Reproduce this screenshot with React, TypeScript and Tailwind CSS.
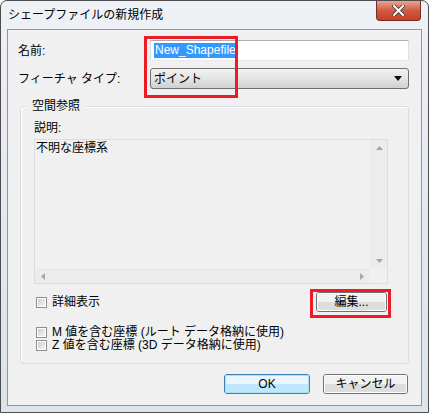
import React from "react";

const font = { fontFamily: '"Liberation Sans", "Noto Sans CJK JP", sans-serif' };

function Checkbox({ label }: { label: string }) {
  return (
    <div className="flex items-center gap-[5px] h-[12px]">
      <div className="w-[11px] h-[11px] border border-[#8e8f8f] bg-white p-[1px]">
        <div className="w-full h-full bg-gradient-to-br from-[#cbcfd5] to-[#f6f6f6]" />
      </div>
      <span className="text-[12px] leading-[12px] text-black whitespace-nowrap">{label}</span>
    </div>
  );
}

function Button({ label, w, def }: { label: string; w: string; def?: boolean }) {
  return (
    <div
      className={`${w} h-[20px] rounded-[3px] border ${
        def ? "border-[#3c7fb1]" : "border-[#707070]"
      } flex items-center justify-center text-[12px] leading-none text-black relative overflow-hidden`}
    >
      <div
        className={`absolute inset-x-0 top-0 h-1/2 ${
          def ? "bg-[#eaf6fd]" : "bg-[#f2f2f2]"
        }`}
      />
      <div
        className={`absolute inset-x-0 bottom-0 h-1/2 ${
          def ? "bg-[#bee6fd]" : "bg-[#dddddd]"
        }`}
      />
      <div
        className={`absolute inset-0 rounded-[2px] border ${
          def ? "border-[#a6e0f5]" : "border-[#fcfcfc]"
        }`}
      />
      <span className="relative">{label}</span>
    </div>
  );
}

export default function App() {
  return (
    <div style={font} className="w-[429px] h-[413px] bg-white">
      <div className="w-[429px] h-[413px] rounded-t-[7px] border border-[#4d4d4d] bg-gradient-to-b from-[#eef1f5] via-[#e4e9ef] to-[#dde3ea] flex flex-col relative">
        {/* title bar */}
        <div className="h-[28px] flex items-start">
          <div className="pl-[7px] pt-[5px] text-[12px] leading-[18px] text-black">
            シェープファイルの新規作成
          </div>
          <div className="ml-auto mr-[7px] w-[45px] h-[20px] rounded-b-[4px] border border-t-0 border-[#7d2b20] bg-gradient-to-b from-[#e8a494] via-[#d15a40] to-[#c0422a] flex items-center justify-center">
            <svg width="13" height="11" viewBox="0 0 13 11">
              <path
                d="M2 1 L11 10 M11 1 L2 10"
                stroke="#3a3a3a"
                strokeWidth="3.6"
                strokeLinecap="square"
              />
              <path
                d="M2 1 L11 10 M11 1 L2 10"
                stroke="#ffffff"
                strokeWidth="2"
                strokeLinecap="square"
              />
            </svg>
          </div>
        </div>

        {/* client area */}
        <div className="mx-[6px] h-[377px] border border-[#8e98a3] bg-[#f0f0f0] flex flex-col">
          <div className="pt-[10px] pl-[10px] pr-[11px] flex flex-col gap-[7px]">
            <div className="flex items-center">
              <div className="w-[132px] text-[12px] leading-none">名前:</div>
              <div className="w-[259px] h-[21px] border border-t-[#abadb3] border-x-[#dbdfe6] border-b-[#e3e9ef] bg-white flex items-center px-[3px]">
                <span className="bg-[#3399ff] text-white text-[12px] leading-[15px] px-[1px]">
                  New_Shapefile
                </span>
              </div>
            </div>
            <div className="flex items-center">
              <div className="w-[132px] text-[12px] leading-none">フィーチャ タイプ:</div>
              <div className="w-[259px] h-[21px] rounded-[3px] border border-[#707070] bg-gradient-to-b from-[#f2f2f2] via-[#e4e4e4] to-[#d0d0d0] flex items-center pl-[3px] pr-[6px]">
                <span className="text-[12px] leading-none">ポイント</span>
                <svg className="ml-auto" width="8" height="5" viewBox="0 0 8 5">
                  <path d="M0 0 H8 L4 5 Z" fill="#111" />
                </svg>
              </div>
            </div>
          </div>

          {/* group box */}
          <div className="relative mt-[17px] ml-[12px] mr-[12px] h-[258px] rounded-[3px] border border-[#d5dfe5] shadow-[inset_1px_1px_0_#ffffff]">
            <div className="absolute -top-[8px] left-[6px] px-[5px] bg-[#f0f0f0] text-[12px] leading-[15px]">
              空間参照
            </div>
            <div className="pt-[14px] pl-[13px] pr-[20px] flex flex-col">
              <div className="text-[12px] leading-[15px]">説明:</div>
              <div className="mt-[3px] h-[145px] border border-[#d5dfe5] flex flex-col">
                <div className="flex flex-1">
                  <div className="flex-1 pl-[1px] pt-[1px] text-[12px] leading-[15px]">
                    不明な座標系
                  </div>
                  <div className="w-[16px] border-l border-[#e6e6e6] bg-[#ececec] flex flex-col items-center justify-between py-[6px]">
                    <svg width="7" height="4" viewBox="0 0 7 4">
                      <path d="M0 4 L3.5 0 L7 4 Z" fill="#a8a8a8" />
                    </svg>
                    <svg width="7" height="4" viewBox="0 0 7 4">
                      <path d="M0 0 L7 0 L3.5 4 Z" fill="#a8a8a8" />
                    </svg>
                  </div>
                </div>
                <div className="h-[14px] flex">
                  <div className="flex-1 bg-[#ececec] border-t border-[#e6e6e6] flex items-center justify-between px-[6px]">
                    <svg width="4" height="7" viewBox="0 0 4 7">
                      <path d="M4 0 L0 3.5 L4 7 Z" fill="#a8a8a8" />
                    </svg>
                    <svg width="4" height="7" viewBox="0 0 4 7">
                      <path d="M0 0 L4 3.5 L0 7 Z" fill="#a8a8a8" />
                    </svg>
                  </div>
                  <div className="w-[17px] bg-[#f0f0f0]" />
                </div>
              </div>
              <div className="mt-[8px] flex items-center justify-between pl-[2px] pr-[1px]">
                <Checkbox label="詳細表示" />
                <Button label="編集..." w="w-[71px]" />
              </div>
              <div className="mt-[14px] pl-[2px] flex flex-col gap-[1px]">
                <Checkbox label="M 値を含む座標 (ルート データ格納に使用)" />
                <Checkbox label="Z 値を含む座標 (3D データ格納に使用)" />
              </div>
            </div>
          </div>

          {/* bottom buttons */}
          <div className="mt-[10px] pr-[13px] flex justify-end gap-[13px]">
            <Button label="OK" w="w-[86px]" def />
            <Button label="キャンセル" w="w-[85px]" />
          </div>
        </div>

        {/* red annotation rectangles */}
        <div className="absolute left-[143px] top-[35px] w-[94px] h-[62px] border-[3px] border-[#ec1c24]" />
        <div className="absolute left-[309px] top-[288px] w-[81px] h-[29px] border-[3px] border-[#ec1c24]" />
      </div>
    </div>
  );
}
